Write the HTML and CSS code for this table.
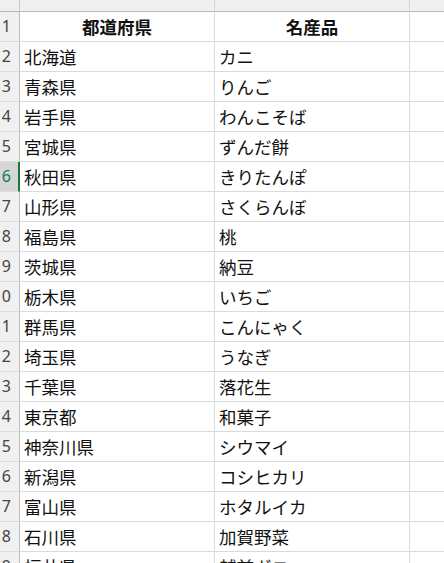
FILE: index.html
```html
<!DOCTYPE html>
<html lang="ja">
<head>
<meta charset="utf-8">
<link rel="stylesheet" href="styles.css">
</head>
<body>
<div class="sheet">
  <div class="row colhead">
    <div class="rh corner"></div>
    <div class="c a"></div>
    <div class="c b"></div>
    <div class="c rest"></div>
  </div>
  <div class="row"><div class="rh">1</div><div class="c a hd">都道府県</div><div class="c b hd">名産品</div><div class="c rest"></div></div>
  <div class="row"><div class="rh">2</div><div class="c a">北海道</div><div class="c b">カニ</div><div class="c rest"></div></div>
  <div class="row"><div class="rh">3</div><div class="c a">青森県</div><div class="c b">りんご</div><div class="c rest"></div></div>
  <div class="row"><div class="rh">4</div><div class="c a">岩手県</div><div class="c b">わんこそば</div><div class="c rest"></div></div>
  <div class="row"><div class="rh">5</div><div class="c a">宮城県</div><div class="c b">ずんだ餅</div><div class="c rest"></div></div>
  <div class="row"><div class="rh sel">6</div><div class="c a">秋田県</div><div class="c b">きりたんぽ</div><div class="c rest"></div></div>
  <div class="row"><div class="rh">7</div><div class="c a">山形県</div><div class="c b">さくらんぼ</div><div class="c rest"></div></div>
  <div class="row"><div class="rh">8</div><div class="c a">福島県</div><div class="c b">桃</div><div class="c rest"></div></div>
  <div class="row"><div class="rh">9</div><div class="c a">茨城県</div><div class="c b">納豆</div><div class="c rest"></div></div>
  <div class="row"><div class="rh">10</div><div class="c a">栃木県</div><div class="c b">いちご</div><div class="c rest"></div></div>
  <div class="row"><div class="rh">11</div><div class="c a">群馬県</div><div class="c b">こんにゃく</div><div class="c rest"></div></div>
  <div class="row"><div class="rh">12</div><div class="c a">埼玉県</div><div class="c b">うなぎ</div><div class="c rest"></div></div>
  <div class="row"><div class="rh">13</div><div class="c a">千葉県</div><div class="c b">落花生</div><div class="c rest"></div></div>
  <div class="row"><div class="rh">14</div><div class="c a">東京都</div><div class="c b">和菓子</div><div class="c rest"></div></div>
  <div class="row"><div class="rh">15</div><div class="c a">神奈川県</div><div class="c b">シウマイ</div><div class="c rest"></div></div>
  <div class="row"><div class="rh">16</div><div class="c a">新潟県</div><div class="c b">コシヒカリ</div><div class="c rest"></div></div>
  <div class="row"><div class="rh">17</div><div class="c a">富山県</div><div class="c b">ホタルイカ</div><div class="c rest"></div></div>
  <div class="row"><div class="rh">18</div><div class="c a">石川県</div><div class="c b">加賀野菜</div><div class="c rest"></div></div>
  <div class="row"><div class="rh">19</div><div class="c a">福井県</div><div class="c b">越前ガニ</div><div class="c rest"></div></div>
</div>
</body>
</html>
```

FILE: styles.css
```css
* { box-sizing: border-box; }
html, body {
  margin: 0;
  padding: 0;
  background: #ffffff;
  overflow: hidden;
  height: 563px;
}
.sheet {
  margin-left: -20px;
  width: 480px;
  font-family: "Noto Sans CJK JP", "Noto Sans", sans-serif;
  color: #111;
}
.row {
  display: grid;
  grid-template-columns: 40px 195px 195px 1fr;
  height: 30px;
}
.c {
  border-right: 1px solid #dadada;
  border-bottom: 1px solid #dadada;
  font-size: 17.5px;
  line-height: 29px;
  padding-left: 4px;
  white-space: nowrap;
  overflow: hidden;
}
.hd {
  font-weight: bold;
  text-align: center;
  padding-left: 0;
}
.rh {
  background: #f0f0f0;
  border-right: 1px solid #bdbdbd;
  border-bottom: 1px solid #dcdcdc;
  font-family: "Noto Sans", "Liberation Sans", sans-serif;
  font-size: 16px;
  line-height: 29px;
  text-align: right;
  padding-right: 8px;
  color: #444;
}
.rh.sel {
  background: #d6d6d6;
  color: #137a43;
  border-right: 2px solid #137a43;
  padding-right: 7px;
}
.colhead {
  height: 12px;
}
.colhead .c, .colhead .rh {
  background: #f0f0f0;
  border-bottom: 1px solid #b9b9b9;
  border-right: 1px solid #d4d4d4;
  line-height: 11px;
}
.colhead .corner {
  border-right: 1px solid #c8c8c8;
  background: #efefef;
}
```
